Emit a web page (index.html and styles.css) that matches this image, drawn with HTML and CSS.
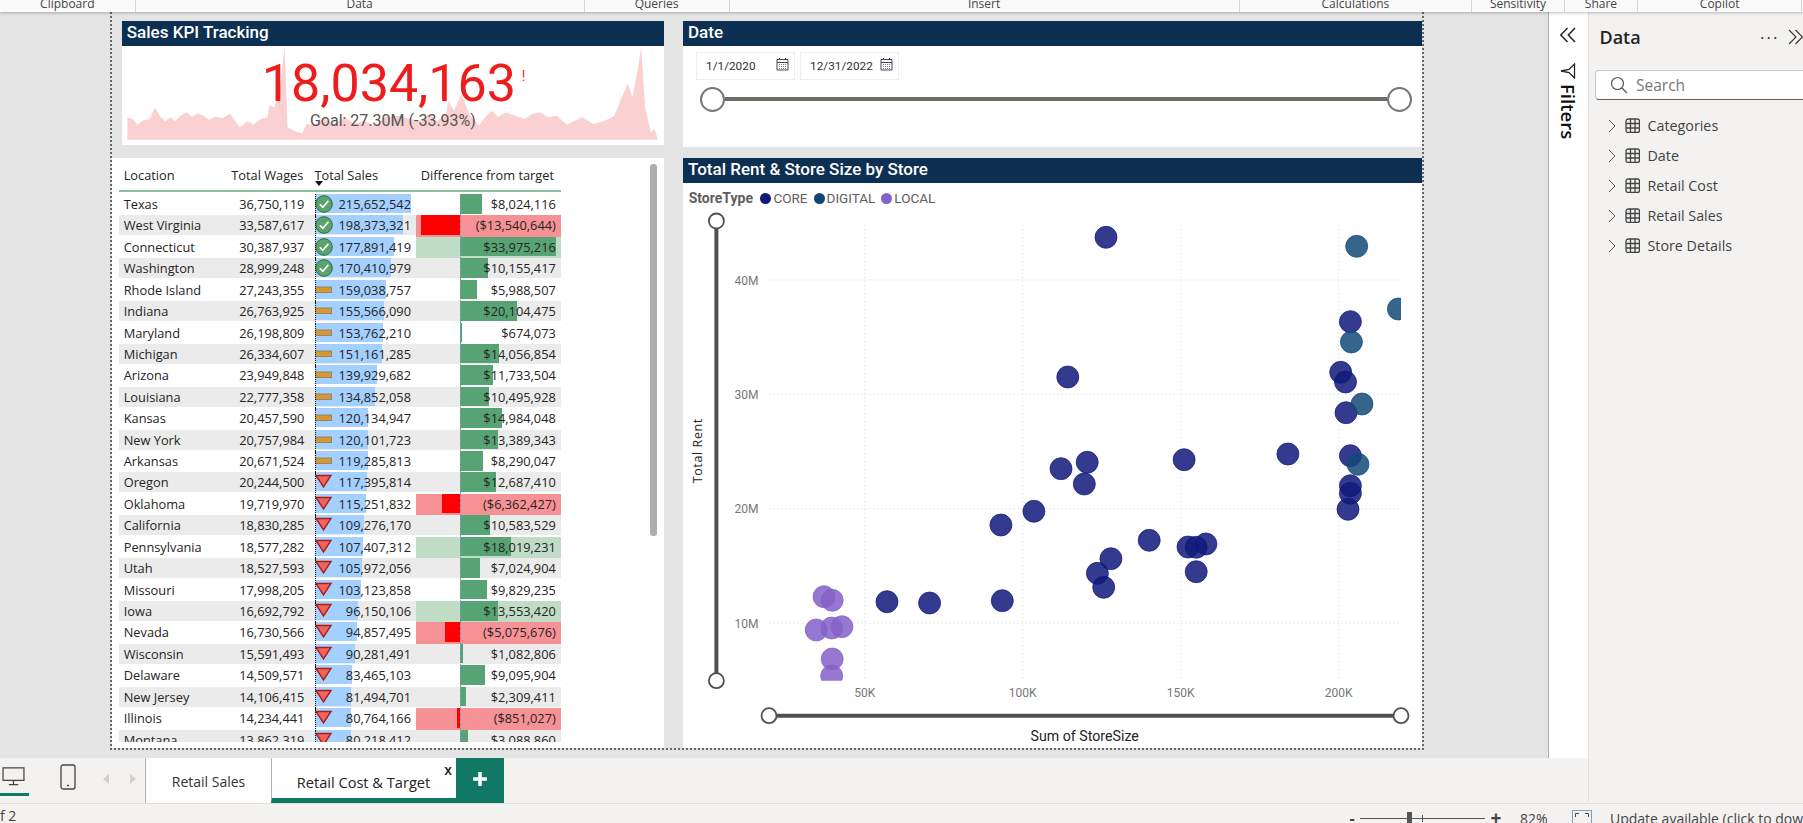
FILE: index.html
```html
<!DOCTYPE html>
<html lang="en">
<head>
<meta charset="utf-8">
<title>Retail Cost &amp; Target</title>
<link rel="stylesheet" href="styles.css">
</head>
<body>
<svg class="defs" width="0" height="0" aria-hidden="true">
  <symbol id="ok" viewBox="0 0 18 18"><circle cx="9" cy="9" r="8.300" class="ok-c"/><path d="M4.800 9.300l3 3 5.600-6.400" class="ok-p"/></symbol>
  <symbol id="mid" viewBox="0 0 18 18"><rect x="0.500" y="6" width="16" height="5.500" class="mid-r"/></symbol>
  <symbol id="down" viewBox="0 0 18 18"><path d="M1 2.500h15L8.500 14z" class="down-p"/></symbol>
  <symbol id="cal" viewBox="0 0 13 14"><path d="M1 2.500h11v10.500H1zM1 5.500h11M3.500 1v2M9.500 1v2" class="cal-l"/><path d="M3 7.500h7M3 9.500h7M3 11.500h7" class="cal-d"/></symbol>
  <symbol id="tbl" viewBox="0 0 15 15"><rect x="1" y="1" width="13" height="13" rx="2" class="tbl-l"/><path d="M5.300 1v13M9.700 1v13M1 5.300h13M1 9.700h13" class="tbl-l"/></symbol>
</svg>

<header class="ribbon">
  <div class="rb r1">Clipboard</div><div class="rb r2">Data</div><div class="rb r3">Queries</div><div class="rb r4">Insert</div><div class="rb r5">Calculations</div><div class="rb r6">Sensitivity</div><div class="rb r7">Share</div><div class="rb r8">Copilot</div>
</header>

<main class="main">
  <section class="canvas">
    <div class="page">
      <div class="tile kpi">
        <h2 class="title">Sales KPI Tracking</h2>
        <div class="kpi-body">
          <svg class="spark" viewBox="57 136 1418 300" preserveAspectRatio="none"><polygon class="spark-a" points="71,417 71,350 85,355 97,372 110,360 130,355 143,320 155,345 170,362 185,350 195,362 210,345 225,335 240,348 255,338 270,345 285,358 300,348 320,352 340,340 365,380 385,362 400,372 420,355 438,350 442,315 455,320 468,280 482,140 490,380 510,392 528,398 540,370 560,372 585,352 610,372 640,350 665,370 690,360 720,375 745,350 780,345 810,355 840,360 860,340 880,362 905,340 910,300 925,330 945,280 965,340 990,375 1010,345 1025,330 1040,350 1060,335 1085,345 1110,355 1130,340 1150,335 1170,350 1195,345 1220,372 1260,350 1290,370 1320,360 1345,345 1360,300 1380,250 1392,290 1405,210 1415,140 1425,320 1440,395 1450,385 1458,417"/></svg>
          <div class="kpi-num">18,034,163<span class="bang">!</span></div>
          <div class="kpi-goal">Goal: 27.30M (-33.93%)</div>
        </div>
      </div>

      <div class="tile date">
        <h2 class="title">Date</h2>
        <div class="date-inputs">
          <div class="date-in"><span>1/1/2020</span><svg class="cal"><use href="#cal"/></svg></div>
          <div class="date-in"><span>12/31/2022</span><svg class="cal"><use href="#cal"/></svg></div>
        </div>
        <div class="range"><span class="knob"></span><span class="track"></span><span class="knob"></span></div>
      </div>

      <div class="tile tablet">
        <div class="thead">
          <span class="loc">Location</span><span class="num">Total Wages</span><span class="h-sales">Total Sales<i class="sort"></i></span><span class="h-diff">Difference from target</span>
        </div>
        <div class="tbody">
          <div class="row"><span class="loc">Texas</span><span class="num">36,750,119</span><div class="sales"><i class="bar" style="width:95.3px"></i><svg class="ic"><use href="#ok"/></svg><span class="val">215,652,542</span></div><div class="diff"><i class="pbar" style="width:22.7px"></i><span class="val">$8,024,116</span></div></div>
          <div class="row"><span class="loc">West Virginia</span><span class="num">33,587,617</span><div class="sales"><i class="bar" style="width:87.7px"></i><svg class="ic"><use href="#ok"/></svg><span class="val">198,373,321</span></div><div class="diff neg"><i class="nbar" style="width:38.3px"></i><span class="val">($13,540,644)</span></div></div>
          <div class="row"><span class="loc">Connecticut</span><span class="num">30,387,937</span><div class="sales"><i class="bar" style="width:78.6px"></i><svg class="ic"><use href="#ok"/></svg><span class="val">177,891,419</span></div><div class="diff hi"><i class="pbar" style="width:96.1px"></i><span class="val">$33,975,216</span></div></div>
          <div class="row"><span class="loc">Washington</span><span class="num">28,999,248</span><div class="sales"><i class="bar" style="width:75.3px"></i><svg class="ic"><use href="#ok"/></svg><span class="val">170,410,979</span></div><div class="diff"><i class="pbar" style="width:28.7px"></i><span class="val">$10,155,417</span></div></div>
          <div class="row"><span class="loc">Rhode Island</span><span class="num">27,243,355</span><div class="sales"><i class="bar" style="width:70.3px"></i><svg class="ic"><use href="#mid"/></svg><span class="val">159,038,757</span></div><div class="diff"><i class="pbar" style="width:16.9px"></i><span class="val">$5,988,507</span></div></div>
          <div class="row"><span class="loc">Indiana</span><span class="num">26,763,925</span><div class="sales"><i class="bar" style="width:68.7px"></i><svg class="ic"><use href="#mid"/></svg><span class="val">155,566,090</span></div><div class="diff"><i class="pbar" style="width:56.9px"></i><span class="val">$20,104,475</span></div></div>
          <div class="row"><span class="loc">Maryland</span><span class="num">26,198,809</span><div class="sales"><i class="bar" style="width:67.9px"></i><svg class="ic"><use href="#mid"/></svg><span class="val">153,762,210</span></div><div class="diff"><i class="pbar" style="width:1.9px"></i><span class="val">$674,073</span></div></div>
          <div class="row"><span class="loc">Michigan</span><span class="num">26,334,607</span><div class="sales"><i class="bar" style="width:66.8px"></i><svg class="ic"><use href="#mid"/></svg><span class="val">151,161,285</span></div><div class="diff"><i class="pbar" style="width:39.8px"></i><span class="val">$14,056,854</span></div></div>
          <div class="row"><span class="loc">Arizona</span><span class="num">23,949,848</span><div class="sales"><i class="bar" style="width:61.8px"></i><svg class="ic"><use href="#mid"/></svg><span class="val">139,929,682</span></div><div class="diff"><i class="pbar" style="width:33.2px"></i><span class="val">$11,733,504</span></div></div>
          <div class="row"><span class="loc">Louisiana</span><span class="num">22,777,358</span><div class="sales"><i class="bar" style="width:59.6px"></i><svg class="ic"><use href="#mid"/></svg><span class="val">134,852,058</span></div><div class="diff"><i class="pbar" style="width:29.7px"></i><span class="val">$10,495,928</span></div></div>
          <div class="row"><span class="loc">Kansas</span><span class="num">20,457,590</span><div class="sales"><i class="bar" style="width:53.1px"></i><svg class="ic"><use href="#mid"/></svg><span class="val">120,134,947</span></div><div class="diff"><i class="pbar" style="width:42.4px"></i><span class="val">$14,984,048</span></div></div>
          <div class="row"><span class="loc">New York</span><span class="num">20,757,984</span><div class="sales"><i class="bar" style="width:53.1px"></i><svg class="ic"><use href="#mid"/></svg><span class="val">120,101,723</span></div><div class="diff"><i class="pbar" style="width:37.9px"></i><span class="val">$13,389,343</span></div></div>
          <div class="row"><span class="loc">Arkansas</span><span class="num">20,671,524</span><div class="sales"><i class="bar" style="width:52.7px"></i><svg class="ic"><use href="#mid"/></svg><span class="val">119,285,813</span></div><div class="diff"><i class="pbar" style="width:23.5px"></i><span class="val">$8,290,047</span></div></div>
          <div class="row"><span class="loc">Oregon</span><span class="num">20,244,500</span><div class="sales"><i class="bar" style="width:51.9px"></i><svg class="ic"><use href="#down"/></svg><span class="val">117,395,814</span></div><div class="diff"><i class="pbar" style="width:35.9px"></i><span class="val">$12,687,410</span></div></div>
          <div class="row"><span class="loc">Oklahoma</span><span class="num">19,719,970</span><div class="sales"><i class="bar" style="width:50.9px"></i><svg class="ic"><use href="#down"/></svg><span class="val">115,251,832</span></div><div class="diff neg"><i class="nbar" style="width:18px"></i><span class="val">($6,362,427)</span></div></div>
          <div class="row"><span class="loc">California</span><span class="num">18,830,285</span><div class="sales"><i class="bar" style="width:48.3px"></i><svg class="ic"><use href="#down"/></svg><span class="val">109,276,170</span></div><div class="diff"><i class="pbar" style="width:30px"></i><span class="val">$10,583,529</span></div></div>
          <div class="row"><span class="loc">Pennsylvania</span><span class="num">18,577,282</span><div class="sales"><i class="bar" style="width:47.5px"></i><svg class="ic"><use href="#down"/></svg><span class="val">107,407,312</span></div><div class="diff hi"><i class="pbar" style="width:51px"></i><span class="val">$18,019,231</span></div></div>
          <div class="row"><span class="loc">Utah</span><span class="num">18,527,593</span><div class="sales"><i class="bar" style="width:46.8px"></i><svg class="ic"><use href="#down"/></svg><span class="val">105,972,056</span></div><div class="diff"><i class="pbar" style="width:19.9px"></i><span class="val">$7,024,904</span></div></div>
          <div class="row"><span class="loc">Missouri</span><span class="num">17,998,205</span><div class="sales"><i class="bar" style="width:45.6px"></i><svg class="ic"><use href="#down"/></svg><span class="val">103,123,858</span></div><div class="diff"><i class="pbar" style="width:27.8px"></i><span class="val">$9,829,235</span></div></div>
          <div class="row"><span class="loc">Iowa</span><span class="num">16,692,792</span><div class="sales"><i class="bar" style="width:42.5px"></i><svg class="ic"><use href="#down"/></svg><span class="val">96,150,106</span></div><div class="diff hi"><i class="pbar" style="width:38.4px"></i><span class="val">$13,553,420</span></div></div>
          <div class="row"><span class="loc">Nevada</span><span class="num">16,730,566</span><div class="sales"><i class="bar" style="width:41.9px"></i><svg class="ic"><use href="#down"/></svg><span class="val">94,857,495</span></div><div class="diff neg"><i class="nbar" style="width:14.4px"></i><span class="val">($5,075,676)</span></div></div>
          <div class="row"><span class="loc">Wisconsin</span><span class="num">15,591,493</span><div class="sales"><i class="bar" style="width:39.9px"></i><svg class="ic"><use href="#down"/></svg><span class="val">90,281,491</span></div><div class="diff"><i class="pbar" style="width:3.1px"></i><span class="val">$1,082,806</span></div></div>
          <div class="row"><span class="loc">Delaware</span><span class="num">14,509,571</span><div class="sales"><i class="bar" style="width:36.9px"></i><svg class="ic"><use href="#down"/></svg><span class="val">83,465,103</span></div><div class="diff"><i class="pbar" style="width:25.7px"></i><span class="val">$9,095,904</span></div></div>
          <div class="row"><span class="loc">New Jersey</span><span class="num">14,106,415</span><div class="sales"><i class="bar" style="width:36px"></i><svg class="ic"><use href="#down"/></svg><span class="val">81,494,701</span></div><div class="diff"><i class="pbar" style="width:6.5px"></i><span class="val">$2,309,411</span></div></div>
          <div class="row"><span class="loc">Illinois</span><span class="num">14,234,441</span><div class="sales"><i class="bar" style="width:35.7px"></i><svg class="ic"><use href="#down"/></svg><span class="val">80,764,166</span></div><div class="diff neg"><i class="nbar" style="width:2.4px"></i><span class="val">($851,027)</span></div></div>
          <div class="row"><span class="loc">Montana</span><span class="num">13,862,319</span><div class="sales"><i class="bar" style="width:35.4px"></i><svg class="ic"><use href="#down"/></svg><span class="val">80,218,412</span></div><div class="diff"><i class="pbar" style="width:8.7px"></i><span class="val">$3,088,860</span></div></div>
        </div>
        <i class="scroll"></i>
      </div>

      <div class="tile scatter">
        <h2 class="title">Total Rent &amp; Store Size by Store</h2>
        <div class="legend">
          <b class="leg-t">StoreType</b>
          <span class="leg"><i class="dot d-core"></i>CORE</span>
          <span class="leg"><i class="dot d-digi"></i>DIGITAL</span>
          <span class="leg"><i class="dot d-local"></i>LOCAL</span>
        </div>
        <svg class="plot" viewBox="683 209 739 540" width="739" height="540">
          <defs><clipPath id="pc"><rect x="730" y="212" width="671" height="468.700"/></clipPath></defs>
          <g class="grid">
            <path d="M864.700 225V680M1022.700 225V680M1180.700 225V680M1338.700 225V680"/>
            <path d="M769.700 280H1399M769.700 394.300H1399M769.700 508.700H1399M769.700 623.300H1399"/>
          </g>
          <g class="ax">
            <text x="758.500" y="284.500">40M</text><text x="758.500" y="398.800">30M</text><text x="758.500" y="513.200">20M</text><text x="758.500" y="627.800">10M</text>
          </g>
          <g class="ax ax-x">
            <text x="864.700" y="697">50K</text><text x="1022.700" y="697">100K</text><text x="1180.700" y="697">150K</text><text x="1338.700" y="697">200K</text>
          </g>
          <text class="ytitle" transform="translate(701.500 450.700) rotate(-90)">Total Rent</text>
          <text class="xtitle" x="1084.700" y="741">Sum of StoreSize</text>
          <path class="sl" d="M716.400 228V673M776.500 715.700H1393.500"/>
          <ellipse class="hd" cx="716.400" cy="221" rx="7.500" ry="7.500"/><ellipse class="hd" cx="716.400" cy="680.700" rx="7.500" ry="7.500"/>
          <ellipse class="hd" cx="769" cy="715.700" rx="7.500" ry="7.500"/><ellipse class="hd" cx="1401" cy="715.700" rx="7.500" ry="7.500"/>
          <g clip-path="url(#pc)">
            <g class="pt core">
              <circle cx="1106" cy="237.300" r="11"/><circle cx="1350.400" cy="321.700" r="11"/><circle cx="1067.800" cy="377" r="11"/><circle cx="1340.700" cy="372.300" r="11"/><circle cx="1345.500" cy="382" r="11"/><circle cx="1346" cy="412.700" r="11"/><circle cx="1287.900" cy="454" r="11"/><circle cx="1350.400" cy="455.700" r="11"/><circle cx="1184.100" cy="459.700" r="11"/><circle cx="1087.200" cy="462.300" r="11"/><circle cx="1061" cy="468.700" r="11"/><circle cx="1084.300" cy="484" r="11"/><circle cx="1350.400" cy="485.700" r="11"/><circle cx="1350.400" cy="493.300" r="11"/><circle cx="1348" cy="509.300" r="11"/><circle cx="1033.900" cy="511.300" r="11"/><circle cx="1000.900" cy="525" r="11"/><circle cx="1149.200" cy="540.300" r="11"/><circle cx="1205.900" cy="544" r="11"/><circle cx="1188" cy="547" r="11"/><circle cx="1196.200" cy="547.300" r="11"/><circle cx="1110.900" cy="558.700" r="11"/><circle cx="1097.400" cy="573.300" r="11"/><circle cx="1196.200" cy="571.700" r="11"/><circle cx="1103.700" cy="587.300" r="11"/><circle cx="887" cy="601.700" r="11"/><circle cx="929.600" cy="603" r="11"/><circle cx="1002.300" cy="600.700" r="11"/>
            </g>
            <g class="pt digi">
              <circle cx="1356.700" cy="246.300" r="11"/><circle cx="1398.400" cy="309" r="11"/><circle cx="1351.400" cy="342" r="11"/><circle cx="1362" cy="404" r="11"/><circle cx="1358" cy="464.300" r="11"/>
            </g>
            <g class="pt local">
              <circle cx="824" cy="596.700" r="11"/><circle cx="832.200" cy="600.300" r="11"/><circle cx="816.200" cy="630" r="11"/><circle cx="831.700" cy="628" r="11"/><circle cx="841.900" cy="626.700" r="11"/><circle cx="832.200" cy="659" r="11"/><circle cx="831.700" cy="676" r="11"/>
            </g>
          </g>
        </svg>
      </div>
    </div>
  </section>

  <aside class="filters">
    <svg class="fl-chev" viewBox="0 0 16 16"><path d="M7.500 1L0.800 8l6.700 7M15 1L8.300 8l6.700 7"/></svg>
    <svg class="fl-fun" viewBox="0 0 16 16"><path d="M14.500 1v14L9 9.500 1 8l8-1.500z"/></svg>
    <span class="fl-t">Filters</span>
  </aside>

  <aside class="data">
    <div class="data-h"><h3 class="data-t">Data</h3><span class="dots">···</span><svg class="dh-chev" viewBox="0 0 16 16"><path d="M1 1l7 7-7 7M7.500 1l7 7-7 7"/></svg></div>
    <div class="search"><svg class="s-ic" viewBox="0 0 18 18"><circle cx="7.500" cy="7.500" r="6"/><path d="M12 12l5 5"/></svg><span>Search</span></div>
    <ul class="tree">
      <li><svg class="tc" viewBox="0 0 8 14"><path d="M1 1l6 6-6 6"/></svg><svg class="ti"><use href="#tbl"/></svg>Categories</li>
      <li><svg class="tc" viewBox="0 0 8 14"><path d="M1 1l6 6-6 6"/></svg><svg class="ti"><use href="#tbl"/></svg>Date</li>
      <li><svg class="tc" viewBox="0 0 8 14"><path d="M1 1l6 6-6 6"/></svg><svg class="ti"><use href="#tbl"/></svg>Retail Cost</li>
      <li><svg class="tc" viewBox="0 0 8 14"><path d="M1 1l6 6-6 6"/></svg><svg class="ti"><use href="#tbl"/></svg>Retail Sales</li>
      <li><svg class="tc" viewBox="0 0 8 14"><path d="M1 1l6 6-6 6"/></svg><svg class="ti"><use href="#tbl"/></svg>Store Details</li>
    </ul>
  </aside>
</main>

<nav class="tabs">
  <div class="view view-d"><svg class="v-ic" viewBox="0 0 24 20"><path d="M1 1h22v13H1zM12 14v4M7 18.500h10"/></svg></div>
  <div class="view view-m"><svg class="v-ph" viewBox="0 0 16 26"><rect x="1" y="1" width="14" height="24" rx="2"/><path d="M7 21.500h2"/></svg></div>
  <div class="arrows"><i class="arr arr-l"></i><i class="arr arr-r"></i></div>
  <div class="tab">Retail Sales</div>
  <div class="tab tab-on">Retail Cost &amp; Target<span class="x">x</span></div>
  <div class="add"><svg class="add-ic" viewBox="0 0 14 14"><path d="M7 0v14M0 7h14"/></svg></div>
</nav>

<footer class="status">
  <span class="pg">f 2</span>
  <div class="zoom">
    <span class="z-b">-</span>
    <div class="z-sl"><i class="z-th"></i><i class="z-tick"></i></div>
    <span class="z-b z-p">+</span>
    <span class="z-v">82%</span>
    <svg class="fit" viewBox="0 0 20 20"><rect x="0.500" y="0.500" width="19" height="19" class="fit-o"/><path d="M3.500 7V3.500H7M13 3.500h3.500V7M3.500 13v3.500H7M13 16.500h3.500V13" class="fit-i"/></svg>
    <span class="upd">Update available (click to download)</span>
  </div>
</footer>
</body>
</html>
```
FILE: styles.css
```css
* { box-sizing: border-box; }
html, body { margin: 0; padding: 0; height: 100%; }
body {
  width: 1803px; height: 823px; overflow: hidden;
  display: flex; flex-direction: column;
  font-family: "Open Sans", "Noto Sans", sans-serif;
  background: #f3f2f1; color: #252423;
}
.defs { position: absolute; }

/* ribbon */
.ribbon {
  height: 12px; flex: none; display: grid; position: relative; z-index: 3;
  grid-template-columns: 135.6px 449px 145px 510px 232.6px 92.5px 73.5px 164px 1fr;
  background: #fafafa; box-shadow: 0 1px 3px rgba(0,0,0,.25); overflow: hidden;
}
.rb {
  font-size: 12px; line-height: 12px; text-align: center; color: #444;
  border-right: 1px solid #d6d6d6; margin-top: -2px; height: 14px;
}

/* main */
.main { flex: none; height: 746px; display: flex; }
.canvas { width: 1547.6px; flex: none; background: #e4e4e4; padding-left: 110px; }
.page {
  width: 1314px; height: 738px; border: 2px dotted #666; border-top: 0;
  padding-top: 9px;
  display: grid; grid-template-columns: 552px 739px; column-gap: 19px;
  grid-template-rows: 126px 590px; row-gap: 11px;
}
.tile { background: #fff; position: relative; overflow: hidden; }
.title {
  margin: 0; height: 24.5px; background: #0d3052; color: #fff;
  font: 500 17px/22.5px Roboto, sans-serif; padding-left: 5px;
}

/* KPI */
.kpi { margin-left: 9.8px; height: 124px; }
.kpi-body { position: relative; height: 99.5px; text-align: center; }
.spark { position: absolute; left: 0; top: 0; width: 100%; height: 100px; }
.spark-a { fill: #fbd0d0; }
.kpi-num {
  position: relative; font: 400 52px/60px Roboto, sans-serif; color: #ee1c1c;
  padding-right: 8px; padding-top: 8.5px; height: 68px;
}
.bang { position: absolute; font-size: 14px; line-height: 14px; left: 400px; top: 23px; font-family: Roboto, sans-serif; }
.kpi-goal { position: relative; font: 400 16px/20px Roboto, sans-serif; color: #555; margin-top: -3px; }

/* date */
.date-inputs { display: flex; gap: 5.5px; padding: 6px 0 0 13px; }
.date-in {
  width: 98.5px; height: 28px; border: 1px solid #eee;
  display: flex; align-items: center; justify-content: space-between;
  padding: 0 5px 0 9px; font: 11.800px Roboto, sans-serif; color: #333;
}
.cal { width: 13px; height: 14px; margin-bottom: 3px; flex: none; }
.cal-l { fill: none; stroke: #445; stroke-width: 1; }
.cal-d { fill: none; stroke: #778; stroke-width: 1; stroke-dasharray: 1 1; }
.range { display: flex; align-items: center; margin: 7px 0 0 16.500px; width: 712px; }
.knob { width: 25px; height: 25px; flex: none; border-radius: 50%; border: 2px solid #777; background: #fff; }
.track { flex: 1; height: 4px; background: #6f6b67; }

/* table */
.thead, .row {
  display: grid; grid-template-columns: 100px 85.4px 107px 149.6px;
  width: 442px; margin-left: 7px;
}
.thead {
  height: 28px; margin-top: 6px; align-items: center; font-size: 12.800px; color: #252423;
  border-bottom: 2px solid #8cc09c; padding-bottom: 4px;
}
.thead .num { white-space: nowrap; justify-self: end; margin-right: 1px; }
.h-sales { position: relative; margin-left: 10px; white-space: nowrap; }
.sort {
  position: absolute; left: 0; top: 15px; width: 0; height: 0;
  border-left: 4.500px solid transparent; border-right: 4.500px solid transparent; border-top: 5px solid #111;
  margin-left: 1px;
}
.h-diff { white-space: nowrap; justify-self: end; margin-right: 7px; }
.tbody {
  display: flex; flex-direction: column; gap: 1.430px; height: 550px; overflow: hidden; padding-top: 2px;
}
.row { flex: none; height: 20px; font-size: 12.800px; line-height: 21.500px; align-items: stretch; }
.row:nth-child(even) { background: #ebebeb; }
.loc { padding-left: 4.700px; white-space: nowrap; }
.num { text-align: right; }
.sales { position: relative; margin-left: 11px; display: flex; justify-content: space-between; width: 95.600px; }
.sales::before, .diff::before {
  content: ""; position: absolute; top: 0; bottom: -1.430px; z-index: 2;
}
.sales::before { left: 0; border-left: 1px dotted #111; }
.diff::before { left: 44px; border-left: 1px dashed #6f9fc0; }
.bar { position: absolute; left: 0; top: 0; height: 19px; background: #a3d0ff; }
.ic { position: relative; width: 18px; height: 18px; flex: none; margin-top: 1px; }
.val { position: relative; white-space: nowrap; }
.ok-c { fill: #5aa36e; stroke: #2f6b42; stroke-width: 1; }
.ok-p { fill: none; stroke: #fff; stroke-width: 1.600; }
.mid-r { fill: #d8972f; stroke: #8c8672; stroke-width: 1; }
.down-p { fill: #f0645a; stroke: #a81e1e; stroke-width: 1.400; }
.diff { position: relative; margin-left: 4.300px; text-align: right; padding-right: 5.200px; }
.diff.neg { background: #f69295; }
.diff.hi { background: #c0dcc5; }
.pbar { position: absolute; left: 44px; top: 0; height: 19.500px; background: #57a373; }
.nbar { position: absolute; right: 101.300px; top: 0; height: 19.500px; background: #ff0000; }
.scroll {
  position: absolute; left: 538px; top: 5.500px; width: 7px; height: 372px;
  background: #b0aeac; border-radius: 3px;
}

/* scatter */
.legend { display: flex; align-items: center; height: 26px; padding: 5px 0 0 5.700px; font: 14px Roboto, sans-serif; color: #605e5c; }
.leg-t { font-weight: 700; margin-right: 7.500px; }
.leg { display: flex; align-items: center; gap: 2px; margin-right: 6px; font-size: 13.500px; }
.dot { width: 11px; height: 11px; border-radius: 50%; }
.d-core { background: #11197a; }
.d-digi { background: #12437a; }
.d-local { background: #8560c8; }
.plot { display: block; }
.grid path { fill: none; stroke: #d9d9d9; stroke-width: 1; stroke-dasharray: 1 3; }
.ax text { font: 12px Roboto, sans-serif; fill: #777; text-anchor: end; }
.ax-x text { text-anchor: middle; }
.ytitle { font: 12.500px "Open Sans", sans-serif; fill: #252423; text-anchor: middle; letter-spacing: .6px; }
.xtitle { font: 14.200px Roboto, sans-serif; fill: #252423; text-anchor: middle; }
.sl { fill: none; stroke: #505050; stroke-width: 4; }
.hd { fill: #fff; stroke: #505050; stroke-width: 1.800; }
.pt circle { fill-opacity: .85; stroke-width: .8; stroke-opacity: .9; }
.core circle { fill: #11197a; stroke: #11197a; }
.digi circle { fill: #134a78; stroke: #134a78; }
.local circle { fill: #8560c8; stroke: #8560c8; }

/* filters */
.filters {
  width: 40.400px; flex: none; background: #fff; border-left: 1px solid #b3b0ad;
  display: flex; flex-direction: column; align-items: center; padding-top: 15px;
}
.fl-chev { width: 16px; height: 16px; fill: none; stroke: #222; stroke-width: 1.500; flex: none; }
.fl-fun { width: 16px; height: 16px; margin-top: 20px; fill: none; stroke: #222; stroke-width: 1.300; flex: none; }
.fl-t { writing-mode: vertical-rl; font: 600 18.500px "Open Sans", sans-serif; color: #111; margin-top: 5px; }

/* data */
.data { flex: 1; background: #f3f2f1; border-left: 1px solid #e1dfdd; overflow: hidden; height: 790px; position: relative; z-index: 1; }
.data-h { display: flex; align-items: center; height: 28px; margin-top: 11px; padding-left: 10.500px; }
.data-t { margin: 0; font: 600 18px "Open Sans", sans-serif; color: #252423; flex: none; width: 160.500px; }
.dots { font-size: 17px; font-weight: 400; letter-spacing: 2px; width: 28px; color: #333; flex: none; }
.dh-chev { width: 16px; height: 16px; fill: none; stroke: #333; stroke-width: 1.100; flex: none; }
.search {
  width: 300px; height: 29.500px; margin: 19px 0 0 6px; background: #fff;
  border: 1px solid #c8c6c4; border-bottom-color: #605e5c; border-radius: 4px;
  display: flex; align-items: center; padding-left: 14px; gap: 8px;
  font-size: 15.500px; color: #797775;
}
.s-ic { width: 18px; height: 18px; fill: none; stroke: #555; stroke-width: 1.200; }
.tree { list-style: none; margin: 11px 0 0; padding: 0; }
.tree li { height: 30px; display: flex; align-items: center; padding-left: 19px; font-size: 14.300px; color: #424242; }
.tc { width: 8px; height: 14px; fill: none; stroke: #555; stroke-width: 1; }
.ti { width: 15.500px; height: 15.500px; margin: 0 7px 0 9px; }
.tbl-l { fill: none; stroke: #444; stroke-width: 1.300; }

/* tabs */
.tabs { flex: none; height: 44.500px; margin-top: 0; display: flex; background: #f3f2f1; width: 1588px; position: relative; }
.view { position: relative; }
.view-d { width: 29px; padding: 9px 0 0 2px; height: 37.500px; border-bottom: 3px solid #117865; }
.v-ic { width: 23px; height: 19px; display: block; fill: none; stroke: #444; stroke-width: 1.300; }
.view-m { margin-left: 31px; width: 16px; padding-top: 6px; }
.v-ph { width: 16px; height: 26px; display: block; fill: none; stroke: #444; stroke-width: 1.300; }
.arrows { width: 69px; display: flex; gap: 21px; align-items: flex-start; padding: 16px 0 0 27px; flex: none; }
.arr { width: 0; height: 0; border-top: 5px solid transparent; border-bottom: 5px solid transparent; }
.arr-l { border-right: 6px solid #d2d0ce; }
.arr-r { border-left: 6px solid #d2d0ce; }
.tab {
  width: 126px; background: #fff; border-left: 1px solid #b3b0ad;
  display: flex; align-items: center; justify-content: center;
  font-size: 14px; color: #333; padding-top: 3px; flex: none;
}
.tab-on { width: 185px; position: relative; border-bottom: 5px solid #117865; padding-top: 8px; color: #252423; font-weight: 500; padding-right: 1px; font-size: 14.600px; }
.x { position: absolute; right: 4px; top: 3px; font-size: 14px; line-height: 18px; font-weight: 600; color: #222; }
.add { width: 48px; background: #117865; display: flex; align-items: center; justify-content: center; padding-bottom: 2px; }
.add-ic { width: 14px; height: 14px; fill: none; stroke: #fff; stroke-width: 3.500; }

/* status */
.status { flex: none; height: 20.500px; border-top: 1px solid #e1dfdd; background: #f3f2f1; display: flex; font-size: 14px; color: #444; position: relative; z-index: 2; overflow: hidden; }
.pg { width: 1346px; line-height: 24px; flex: none; }
.zoom { display: flex; align-items: center; height: 29px; flex: none; white-space: nowrap; }
.z-b { width: 12px; text-align: center; font-weight: 700; font-size: 16px; }
.z-sl { position: relative; width: 125px; height: 1px; background: #555; margin: 0 2px; }
.z-th { position: absolute; left: 47px; top: -6px; width: 5px; height: 13px; background: #555; }
.z-tick { position: absolute; left: 62px; top: -3px; width: 1px; height: 7px; background: #555; }
.z-p { margin-left: 3px; font-size: 19px; }
.z-v { margin-left: 18px; width: 52px; }
.fit { width: 20px; height: 20px; margin-top: 4px; }
.fit-o { fill: none; stroke: #7f9db5; }
.fit-i { fill: none; stroke: #444; }
.upd { margin-left: 18px; }
```
